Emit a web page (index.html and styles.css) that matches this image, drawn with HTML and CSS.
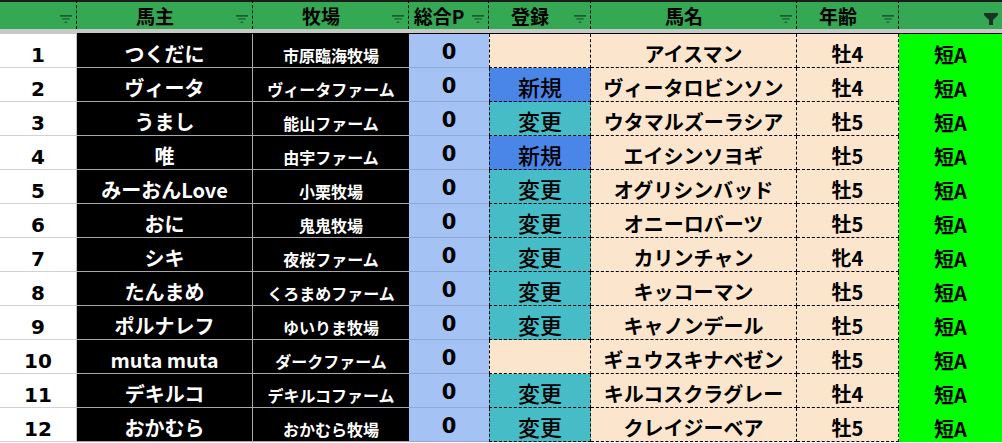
FILE: index.html
```html
<!DOCTYPE html>
<html lang="ja">
<head>
<meta charset="utf-8">
<title>馬主一覧</title>
<link rel="stylesheet" href="styles.css">
</head>
<body>
<div class="sheet">
  <div class="hd hd-first"><svg class="flt" width="12" height="8" viewBox="0 0 12 8"><rect x="0" y="0" width="12" height="1.7"/><rect x="2.3" y="3.3" width="7.4" height="1.2"/><rect x="4.6" y="6.6" width="2.6" height="1.3"/></svg></div>
  <div class="hd">馬主<svg class="flt" width="12" height="8" viewBox="0 0 12 8"><rect x="0" y="0" width="12" height="1.7"/><rect x="2.3" y="3.3" width="7.4" height="1.2"/><rect x="4.6" y="6.6" width="2.6" height="1.3"/></svg></div>
  <div class="hd">牧場<svg class="flt" width="12" height="8" viewBox="0 0 12 8"><rect x="0" y="0" width="12" height="1.7"/><rect x="2.3" y="3.3" width="7.4" height="1.2"/><rect x="4.6" y="6.6" width="2.6" height="1.3"/></svg></div>
  <div class="hd">総合P<svg class="flt" width="12" height="8" viewBox="0 0 12 8"><rect x="0" y="0" width="12" height="1.7"/><rect x="2.3" y="3.3" width="7.4" height="1.2"/><rect x="4.6" y="6.6" width="2.6" height="1.3"/></svg></div>
  <div class="hd">登録<svg class="flt" width="12" height="8" viewBox="0 0 12 8"><rect x="0" y="0" width="12" height="1.7"/><rect x="2.3" y="3.3" width="7.4" height="1.2"/><rect x="4.6" y="6.6" width="2.6" height="1.3"/></svg></div>
  <div class="hd">馬名<svg class="flt" width="12" height="8" viewBox="0 0 12 8"><rect x="0" y="0" width="12" height="1.7"/><rect x="2.3" y="3.3" width="7.4" height="1.2"/><rect x="4.6" y="6.6" width="2.6" height="1.3"/></svg></div>
  <div class="hd">年齢<svg class="flt" width="12" height="8" viewBox="0 0 12 8"><rect x="0" y="0" width="12" height="1.7"/><rect x="2.3" y="3.3" width="7.4" height="1.2"/><rect x="4.6" y="6.6" width="2.6" height="1.3"/></svg></div>
  <div class="hd hd-last"><svg class="flt-on" width="14" height="12" viewBox="0 0 14 12"><polygon points="0,0 14,0 14,2 9,7 9,12 5,12 5,7 0,2"/></svg></div>

  <div class="sep sep-first"></div>
  <div class="sep sep-rest"></div>

  <div class="c no">1</div><div class="c owner">つくだに</div><div class="c farm">市原臨海牧場</div><div class="c pt">0</div><div class="c reg"></div><div class="c horse">アイスマン</div><div class="c age">牡4</div><div class="c rank">短A</div>
  <div class="c no">2</div><div class="c owner">ヴィータ</div><div class="c farm">ヴィータファーム</div><div class="c pt">0</div><div class="c reg new">新規</div><div class="c horse">ヴィータロビンソン</div><div class="c age">牡4</div><div class="c rank">短A</div>
  <div class="c no">3</div><div class="c owner">うまし</div><div class="c farm">能山ファーム</div><div class="c pt">0</div><div class="c reg chg">変更</div><div class="c horse">ウタマルズーラシア</div><div class="c age">牡5</div><div class="c rank">短A</div>
  <div class="c no">4</div><div class="c owner">唯</div><div class="c farm">由宇ファーム</div><div class="c pt">0</div><div class="c reg new">新規</div><div class="c horse">エイシンソヨギ</div><div class="c age">牡5</div><div class="c rank">短A</div>
  <div class="c no">5</div><div class="c owner">みーおんLove</div><div class="c farm">小栗牧場</div><div class="c pt">0</div><div class="c reg chg">変更</div><div class="c horse">オグリシンバッド</div><div class="c age">牡5</div><div class="c rank">短A</div>
  <div class="c no">6</div><div class="c owner">おに</div><div class="c farm">鬼鬼牧場</div><div class="c pt">0</div><div class="c reg chg">変更</div><div class="c horse">オニーロバーツ</div><div class="c age">牡5</div><div class="c rank">短A</div>
  <div class="c no">7</div><div class="c owner">シキ</div><div class="c farm">夜桜ファーム</div><div class="c pt">0</div><div class="c reg chg">変更</div><div class="c horse">カリンチャン</div><div class="c age">牝4</div><div class="c rank">短A</div>
  <div class="c no">8</div><div class="c owner">たんまめ</div><div class="c farm">くろまめファーム</div><div class="c pt">0</div><div class="c reg chg">変更</div><div class="c horse">キッコーマン</div><div class="c age">牡5</div><div class="c rank">短A</div>
  <div class="c no">9</div><div class="c owner">ポルナレフ</div><div class="c farm">ゆいりま牧場</div><div class="c pt">0</div><div class="c reg chg">変更</div><div class="c horse">キャノンデール</div><div class="c age">牡5</div><div class="c rank">短A</div>
  <div class="c no">10</div><div class="c owner">muta muta</div><div class="c farm">ダークファーム</div><div class="c pt">0</div><div class="c reg"></div><div class="c horse">ギュウスキナベゼン</div><div class="c age">牡5</div><div class="c rank">短A</div>
  <div class="c no">11</div><div class="c owner">デキルコ</div><div class="c farm">デキルコファーム</div><div class="c pt">0</div><div class="c reg chg">変更</div><div class="c horse">キルコスクラグレー</div><div class="c age">牡4</div><div class="c rank">短A</div>
  <div class="c no">12</div><div class="c owner">おかむら</div><div class="c farm">おかむら牧場</div><div class="c pt">0</div><div class="c reg chg">変更</div><div class="c horse">クレイジーベア</div><div class="c age">牡5</div><div class="c rank">短A</div>
</div>
</body>
</html>
```

FILE: styles.css
```css
* { box-sizing: border-box; }

html, body {
  margin: 0;
  padding: 0;
  background: #ffffff;
}

body {
  font-family: "Noto Sans CJK JP", "Noto Sans", sans-serif;
  font-weight: 700;
  color: #000;
}

.sheet {
  display: grid;
  grid-template-columns: 77px 176px 156px 80px 102px 206px 102px 103px;
  grid-template-rows: 29px 5px repeat(12, 34px);
  width: 1002px;
}

/* header */
.hd {
  position: relative;
  background: #34a853;
  border-top: 2px solid #1c1c1c;
  border-right: 1px dashed #000;
  display: flex;
  align-items: center;
  justify-content: center;
  padding-right: 19px;
  font-size: 19px;
  line-height: 19px;
}

.hd-last { border-right: none; }

.flt {
  position: absolute;
  right: 4px;
  top: 13px;
  fill: #1d5a2f;
}

.flt-on {
  position: absolute;
  right: 4px;
  top: 11px;
  fill: #1b3322;
}

/* separator bar */
.sep {
  background: #c8c8c8;
}
.sep-first {
  border-bottom: 1px solid #c8c8c8;
}
.sep-rest {
  grid-column: 2 / span 7;
  border-bottom: 1px solid #000;
}

/* body cells */
.c {
  display: flex;
  align-items: flex-end;
  justify-content: center;
  padding-bottom: 3px;
  font-size: 20px;
  line-height: 20px;
  white-space: nowrap;
  overflow: hidden;
}

.no {
  background: #fff;
  border-right: 1px solid #c4c4c4;
  border-bottom: 1px solid #d2d2d2;
  font-family: "DejaVu Sans", sans-serif;
  font-size: 20px;
  line-height: 20px;
  padding-bottom: 2px;
}

.owner {
  background: #000;
  color: #fff;
  border-right: 1px solid #a8a8a8;
  border-bottom: 1px solid #a8a8a8;
}

.farm {
  background: #000;
  color: #fff;
  font-size: 16px;
  line-height: 16px;
  padding-bottom: 4px;
  border-bottom: 1px solid #a8a8a8;
}

.pt {
  background: #a4c2f4;
  border-bottom: 1px solid #8da9d6;
  font-family: "DejaVu Sans", sans-serif;
  font-size: 21px;
  line-height: 21px;
  padding-bottom: 4px;
}

.reg {
  background: #fce5cd;
  border-left: 1px dashed #000;
  border-right: 1px dashed #000;
  border-bottom: 1px dashed #000;
  font-weight: 500;
  font-size: 22px;
  line-height: 22px;
  padding-bottom: 4px;
}
.reg.new { background: #4a86e8; }
.reg.chg { background: #46bdc6; }

.horse {
  background: #fce5cd;
  border-right: 1px dashed #000;
  border-bottom: 1px dashed #000;
}

.age {
  background: #fce5cd;
  border-right: 1px dashed #000;
  border-bottom: 1px dashed #000;
}

.rank {
  background: #00ff00;
}
```
